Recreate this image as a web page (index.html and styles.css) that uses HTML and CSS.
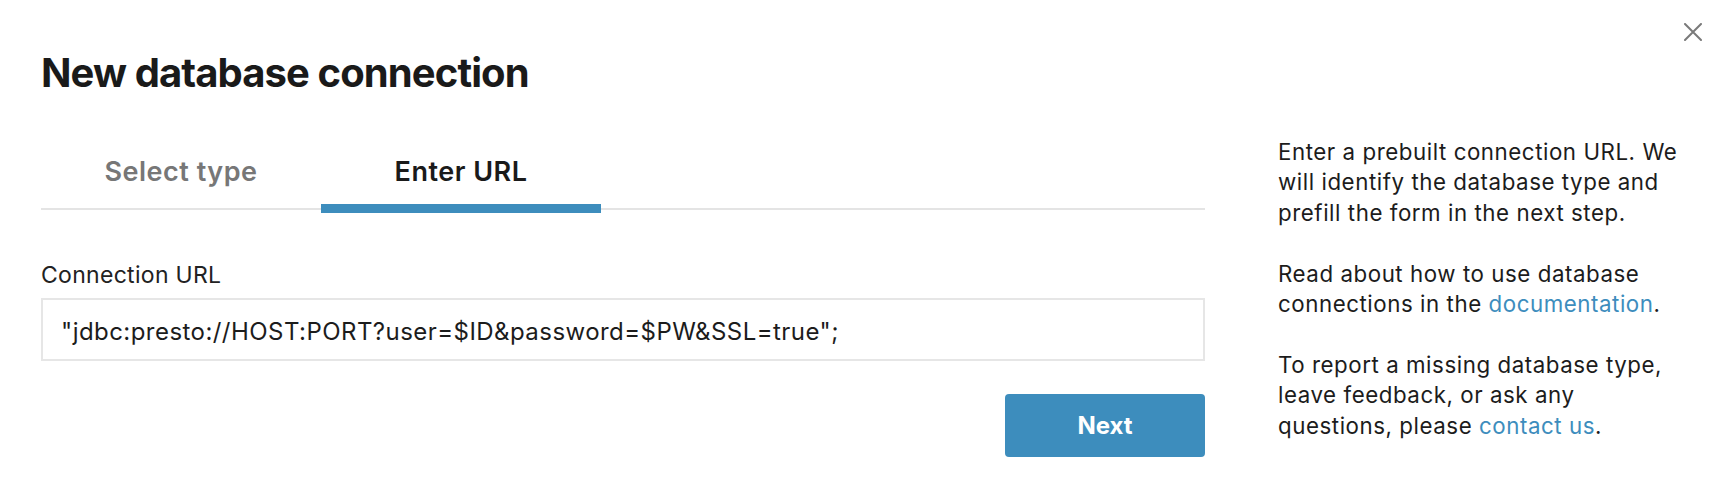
FILE: index.html
```html
<!DOCTYPE html>
<html lang="en">
<head>
<meta charset="utf-8">
<title>New database connection</title>
<link rel="stylesheet" href="styles.css">
</head>
<body>
<div class="dialog">
  <button class="close" aria-label="Close">
    <svg width="18" height="18" viewBox="0 0 18 18"><path d="M1 1 L17 17 M17 1 L1 17" stroke="#7a7a7a" stroke-width="2" stroke-linecap="round" fill="none"/></svg>
  </button>
  <div class="main">
    <h1 class="title">New database connection</h1>
    <div class="tabs">
      <div class="tab">Select type</div>
      <div class="tab active">Enter URL</div>
    </div>
    <label class="label" for="url">Connection URL</label>
    <input id="url" class="url-input" type="text" value="&quot;jdbc:presto://HOST:PORT?user=$ID&amp;password=$PW&amp;SSL=true&quot;;">
    <div class="actions">
      <button class="next">Next</button>
    </div>
  </div>
  <aside class="side">
    <p>Enter a prebuilt connection URL. We<br>will identify the database type and<br>prefill the form in the next step.</p>
    <p>Read about how to use database<br>connections in the <a href="#">documentation</a>.</p>
    <p>To report a missing database type,<br>leave feedback, or ask any<br>questions, please <a href="#">contact us</a>.</p>
  </aside>
</div>
</body>
</html>
```

FILE: styles.css
```css
* { box-sizing: border-box; }
html, body { margin: 0; padding: 0; background: #fff; }
body {
  font-family: Inter, "Liberation Sans", sans-serif;
  color: #1c1c1c;
}
.dialog {
  position: relative;
  display: flex;
  padding: 49px 0 0 41px;
  width: 1734px;
  height: 498px;
}
.close {
  position: absolute;
  top: 23px;
  left: 1684px;
  width: 18px;
  height: 18px;
  padding: 0;
  border: 0;
  background: none;
  display: block;
}
.close svg { display: block; }
.main {
  width: 1164px;
  flex: none;
  display: flex;
  flex-direction: column;
}
.title {
  margin: 0;
  font-size: 40px;
  line-height: 48px;
  font-weight: 700;
  color: #1a1a1a;
  letter-spacing: -0.9px;
}
.tabs {
  display: flex;
  margin-top: 59px;
  border-bottom: 2px solid #e4e4e4;
}
.tab {
  position: relative;
  width: 280px;
  text-align: center;
  font-size: 27px;
  line-height: 32px;
  font-weight: 600;
  letter-spacing: 0.5px;
  color: #777;
  padding-bottom: 20px;
}
.tab.active { color: #1a1a1a; }
.tab.active::after {
  content: "";
  position: absolute;
  left: 0;
  right: 0;
  bottom: -5px;
  height: 9px;
  background: #3d8dbd;
}
.label {
  margin-top: 51px;
  font-size: 23px;
  line-height: 28px;
  letter-spacing: 0.3px;
  color: #222;
}
.url-input {
  margin-top: 9px;
  width: 100%;
  height: 63px;
  border: 2px solid #e6e6e6;
  border-radius: 0;
  padding: 4px 18px 0;
  font-family: Inter, "Liberation Sans", sans-serif;
  font-size: 24px;
  letter-spacing: 0.45px;
  color: #1c1c1c;
  outline: none;
}
.actions {
  display: flex;
  justify-content: flex-end;
  margin-top: 33px;
}
.next {
  width: 200px;
  height: 63px;
  border: 0;
  border-radius: 4px;
  background: #3d8dbd;
  color: #fff;
  font-family: Inter, "Liberation Sans", sans-serif;
  font-size: 24px;
  font-weight: 700;
}
.side {
  margin-left: 73px;
  padding-top: 88px;
  font-size: 22.3px;
  line-height: 30.4px;
  letter-spacing: 0.55px;
  color: #1c1c1c;
}
.side p { margin: 0 0 30.4px; white-space: nowrap; }
.side a { color: #3d8dbd; text-decoration: none; }
```
